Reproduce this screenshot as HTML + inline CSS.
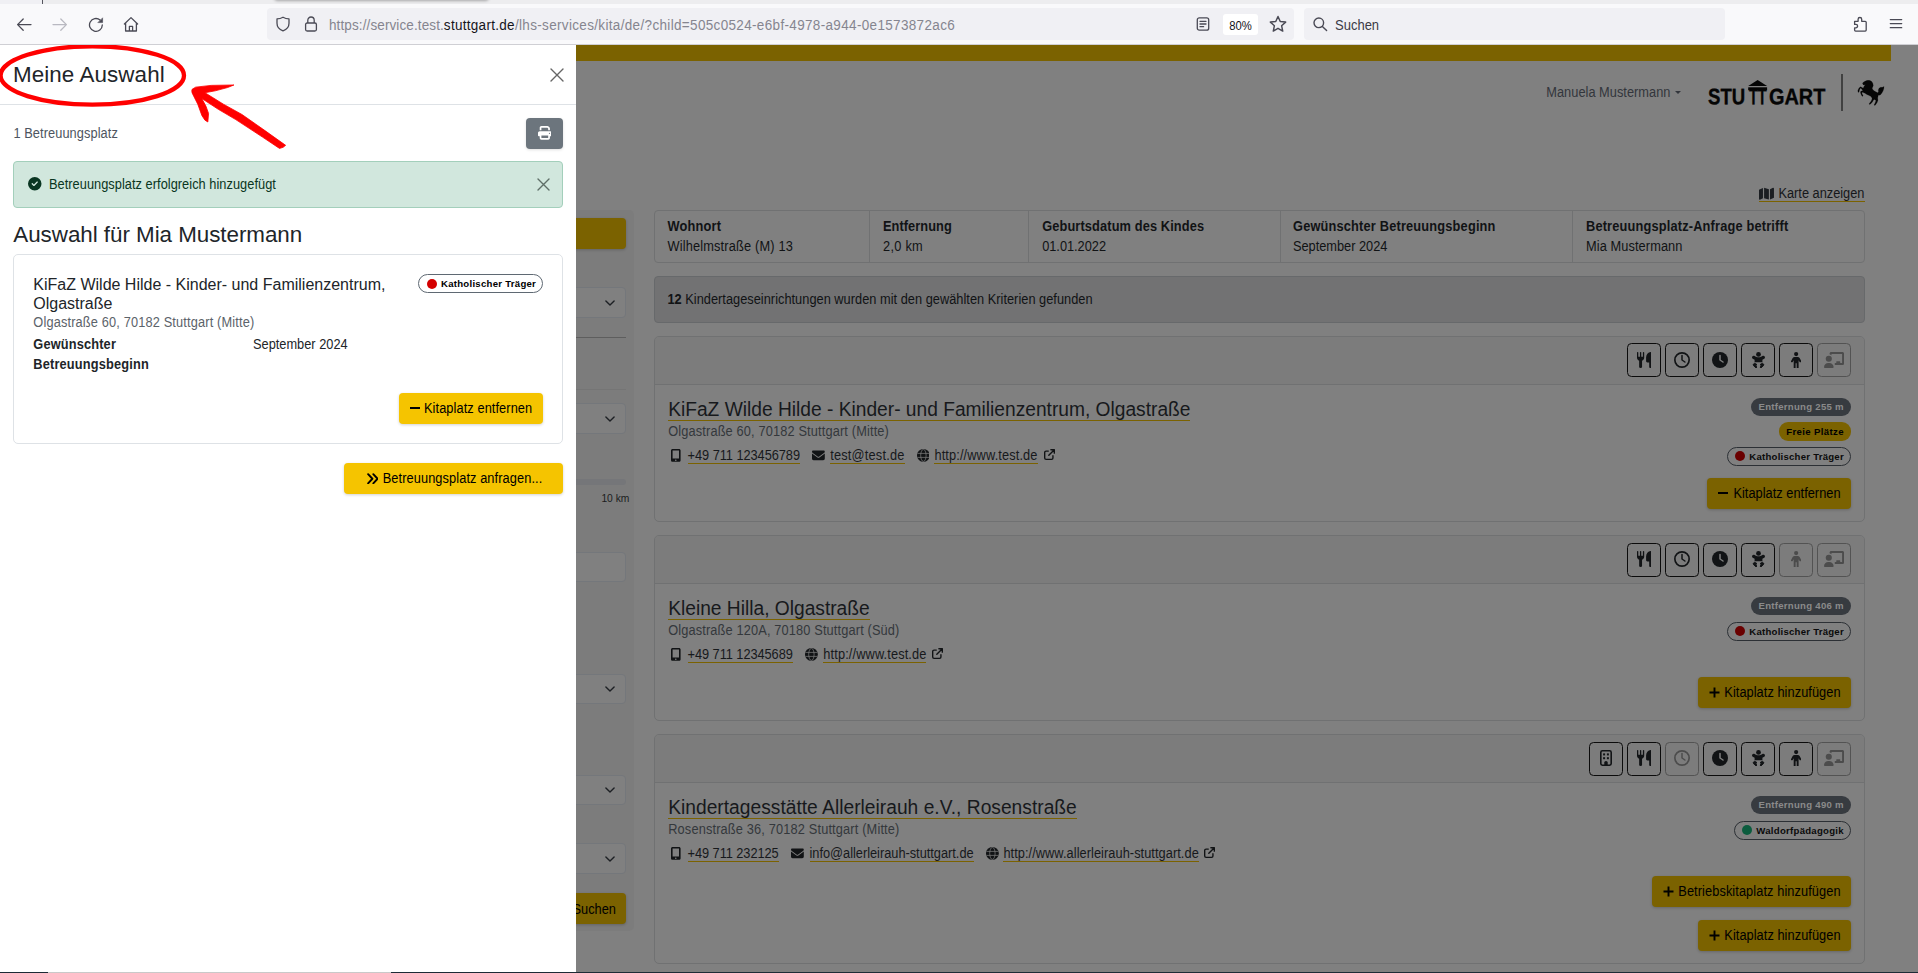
<!DOCTYPE html>
<html lang="de">
<head>
<meta charset="utf-8">
<title>Kita - Meine Auswahl</title>
<style>
*{box-sizing:border-box;margin:0;padding:0}
html,body{width:1918px;height:973px;overflow:hidden;background:#808080}
body{font-family:"Liberation Sans",Arial,sans-serif;font-size:12.8px;line-height:1.5;color:#212529;position:relative}
.abs{position:absolute}
svg{display:block}
/* ---------- browser chrome ---------- */
#chrome{position:absolute;left:0;top:0;width:1918px;height:45px;background:#f9f9fb;border-bottom:1px solid #cfcfd4;z-index:50}
#tabstrip{position:absolute;left:0;top:0;width:1918px;height:4px;background:#ededef}
.ubar{position:absolute;top:8px;height:32px;background:#f0f0f4;border-radius:4px}
.ctext{font-family:"Liberation Sans",sans-serif;font-size:13.5px;line-height:16px;white-space:nowrap;color:#15141a;letter-spacing:.29px;transform:scaleY(1.1);transform-origin:0 20%}
/* ---------- offcanvas ---------- */
#off{position:absolute;left:0;top:45px;width:576px;height:927px;background:#fff;z-index:20}
.btn{position:absolute;background:#f5c400;border-radius:4px;color:#000;font-size:12.8px;line-height:19px;white-space:nowrap;box-shadow:0 1px 3px rgba(0,0,0,.18)}
.badge{position:absolute;border-radius:10px;font-size:9.6px;font-weight:700;line-height:10px;white-space:nowrap}
.txb{transform:scaleY(1.10);transform-origin:0 73%}
/* ---------- background page (dimmed) ---------- */
#page{position:absolute;left:576px;top:45px;width:1342px;height:927px;background:#808080;overflow:hidden;z-index:10;color:#111418}
/*GEN*/
.tx{display:inline-block;transform:scaleY(1.10);transform-origin:0 27%}
.abs.tx{display:block}
.ttl .tx{transform:scaleY(1.07)}
.ttl{font-size:19.200px;line-height:23px;color:#17191c;white-space:nowrap;border-bottom:1.300px solid #7b6200;height:24.300px}
.lnk{color:#17191c;white-space:nowrap;line-height:17px;height:18.300px;border-bottom:1.300px solid #7b6200}
/*END*/
</style>
</head>
<body>
<!-- ================= BROWSER CHROME ================= -->
<div id="chrome">
  <div id="tabstrip"></div>
  <div class="abs" style="left:0;top:0;width:42px;height:4px;background:#f0f0f4"></div>
  <div class="abs" style="left:42px;top:0;width:1px;height:4px;background:#55555e"></div>
  <div class="abs" style="left:275px;top:-6px;width:213px;height:6px;background:#bbb;border-radius:0 0 3px 3px;box-shadow:0 0 3px 1px rgba(0,0,0,.3)"></div>
  <!-- nav icons -->
  <svg class="abs" style="left:16px;top:16px" width="16" height="16" viewBox="0 0 16 16" fill="none" stroke="#4a4a55" stroke-width="1.3" stroke-linecap="round" stroke-linejoin="round"><path d="M15 8.6H1.6M7.2 3 1.6 8.6l5.6 5.6"/></svg>
  <svg class="abs" style="left:52px;top:16px" width="16" height="16" viewBox="0 0 16 16" fill="none" stroke="#b9b9c1" stroke-width="1.3" stroke-linecap="round" stroke-linejoin="round"><path d="M1 8.6h13.4M8.8 3l5.6 5.6-5.6 5.6"/></svg>
  <svg class="abs" style="left:88px;top:16px" width="16" height="16" viewBox="0 0 16 16" fill="none" stroke="#4a4a55" stroke-width="1.3" stroke-linecap="round"><path d="M14.3 9a6.4 6.4 0 1 1-2.2-4.9"/><path d="M14.6 2.2v4.4h-4.4z" fill="#4a4a55" stroke-width=".6" stroke-linejoin="round"/></svg>
  <svg class="abs" style="left:123px;top:16px" width="16" height="16" viewBox="0 0 16 16" fill="none" stroke="#4a4a55" stroke-width="1.3" stroke-linecap="round" stroke-linejoin="round"><path d="M1.4 8 8 1.6 14.6 8M2.6 7v8h10.8V7M6.4 15v-4.6h3.2V15"/></svg>
  <!-- url bar -->
  <div class="ubar" style="left:267px;width:1027px"></div>
  <svg class="abs" style="left:275px;top:16px" width="16" height="16" viewBox="0 0 16 16" fill="none" stroke="#4a4a55" stroke-width="1.3" stroke-linejoin="round"><path d="M8 1.2c2 1.1 4 1.6 6 1.7v4.3c0 3.6-2.4 6.300-6 7.600-3.600-1.300-6-4-6-7.600V2.900c2-.1 4-.6 6-1.700z"/></svg>
  <svg class="abs" style="left:303px;top:15px" width="16" height="18" viewBox="0 0 16 18" fill="none" stroke="#4a4a55" stroke-width="1.3" stroke-linejoin="round"><rect x="2.600" y="8" width="10.800" height="8" rx="1.500"/><path d="M4.800 8V5.200a3.200 3.200 0 0 1 6.400 0V8"/></svg>
  <div class="abs ctext" id="url" style="left:329px;top:17px;color:#85858f"><span style="letter-spacing:.11px">https://service.test.</span><span style="color:#15141a">stuttgart.de</span><span style="letter-spacing:.335px">/lhs-services/kita/de/?child=505c0524-e6bf-4978-a944-0e1573872ac6</span></div>
  <svg class="abs" style="left:1195px;top:16px" width="16" height="16" viewBox="0 0 16 16" fill="none" stroke="#4a4a55" stroke-width="1.300" stroke-linejoin="round" stroke-linecap="round"><rect x="2.300" y="1.800" width="11.400" height="12.400" rx="2"/><path d="M5 5.300h6M5 8h6M5 10.700h3.600"/></svg>
  <div class="abs" style="left:1223px;top:14.400px;width:35px;height:20.400px;background:#fff;border-radius:3px"></div>
  <div class="abs ctext" style="left:1223px;top:17px;width:35px;text-align:center;font-size:11.300px;letter-spacing:0;color:#15141a">80%</div>
  <svg class="abs" style="left:1269px;top:15.300px" width="18" height="18" viewBox="0 0 16 16" fill="none" stroke="#4a4a55" stroke-width="1.300" stroke-linejoin="round"><path d="M8 1.300l2 4.500 4.800.5-3.600 3.200 1 4.800L8 11.800l-4.200 2.500 1-4.800L1.200 6.300 6 5.800z"/></svg>
  <!-- search bar -->
  <div class="ubar" style="left:1304px;width:421px"></div>
  <svg class="abs" style="left:1312px;top:16px" width="16" height="16" viewBox="0 0 16 16" fill="none" stroke="#4a4a55" stroke-width="1.400" stroke-linecap="round"><circle cx="6.800" cy="6.800" r="4.800"/><path d="M10.400 10.400l4.200 4.200"/></svg>
  <div class="abs ctext" style="left:1335px;top:17px;color:#3b3b46;font-size:13px;letter-spacing:0">Suchen</div>
  <!-- right icons -->
  <svg class="abs" style="left:1852px;top:16px" width="16" height="16" viewBox="0 0 16 16" fill="none" stroke="#4a4a55" stroke-width="1.300" stroke-linejoin="round"><path d="M2.600 5.300h3.500V3.300a1.800 1.800 0 0 1 3.600 0v2h3.500c.6 0 1 .4 1 1v7.800c0 .6-.4 1-1 1H3.600c-.6 0-1-.4-1-1v-2.300h1.300a1.700 1.700 0 0 0 0-3.400H2.600z"/></svg>
  <svg class="abs" style="left:1888px;top:16px" width="16" height="16" viewBox="0 0 16 16" fill="none" stroke="#4a4a55" stroke-width="1.300" stroke-linecap="round"><path d="M2.300 3.600h11.400M2.300 7.600h11.400M2.300 11.700h11.400"/></svg>
</div>

<!-- ================= DIMMED PAGE ================= -->
<div id="page">
  <div class="abs" style="left:0;top:0;width:1315px;height:16px;background:#7b6200"></div>
  <div class="abs tx" id="p_user" style="left:970.3px;top:37px;color:#33363c;white-space:nowrap;letter-spacing:0.019px">Manuela Mustermann</div>
  <svg class="abs" style="left:1098.5px;top:45.5px" width="6" height="3" viewBox="0 0 6 3" fill="#33363c"><path d="M0 0h6L3 3z"/></svg>
  <div class="abs" id="p_logo1" style="left:1132.2px;top:40.0px;font-size:22px;line-height:24px;font-weight:700;color:#050505;white-space:nowrap;transform-origin:0 3.600px;-webkit-text-stroke:.35px #050505;transform:scale(.845,1.02) rotate(.03deg)">STU</div>
  <div class="abs" id="p_logo2" style="left:1172.6px;top:40.0px;font-size:22px;line-height:24px;font-weight:700;color:#050505;white-space:nowrap;transform-origin:0 3.600px;-webkit-text-stroke:.35px #050505;transform:scale(.66,1.02) rotate(.03deg)">TT</div>
  <div class="abs" id="p_logo3" style="left:1193.0px;top:40.0px;font-size:22px;line-height:24px;font-weight:700;color:#050505;white-space:nowrap;transform-origin:0 3.600px;-webkit-text-stroke:.35px #050505;transform:scale(.905,1.02) rotate(.03deg)">GART</div>
  <svg class="abs" style="left:1171px;top:34px" width="22" height="12" viewBox="0 0 22 12"><path d="M1.200 7.100L10.650 .9 20.100 7.100z" fill="#050505"/><rect x="1.200" y="8.300" width="18.900" height="2.900" fill="#050505"/></svg>
  <div class="abs" style="left:1265.3px;top:29px;width:1.300px;height:37px;background:#414141"></div>
  <svg class="abs" style="left:1281px;top:34.5px" width="28" height="26" viewBox="0 0 28 26" fill="#050505" stroke="#050505" stroke-width=".15" stroke-linejoin="round"><path d="M5.47 3.17 L6.6 2.04 L7.96 1.27 L9.54 0.55 L10.9 0.23 L12.26 0.36 L13.62 0.82 L14.97 1.81 L15.88 3.4 L16.33 5.43 L15.74 7.02 L15.2 8.37 L15.88 9.73 L17.46 11.09 L19.27 11.99 L20.86 12.76 L21.44 11.77 L21.26 9.96 L21.99 8.24 L23.57 7.33 L25.15 7.33 L26.29 6.88 L27.05 6.34 L26.87 8.6 L26.15 10.86 L24.93 13.12 L23.57 14.71 L22.44 15.3 L21.53 14.93 L21.08 16.29 L20.72 18.1 L20.99 20.14 L20.18 22.4 L18.82 24.44 L18.0 25.43 L17.01 24.98 L17.82 23.53 L18.59 21.72 L18.82 20.14 L17.46 19.46 L16.56 19.91 L15.43 21.95 L13.84 23.76 L12.71 24.53 L11.94 24.07 L12.85 22.85 L14.2 21.04 L15.11 18.78 L14.52 17.2 L13.62 16.29 L11.58 15.3 L9.77 14.39 L7.96 13.35 L6.83 12.67 L5.47 12.31 L4.79 12.76 L5.24 14.03 L6.15 15.84 L5.47 16.52 L4.43 15.16 L3.66 13.35 L3.43 11.77 L4.34 11.09 L5.7 10.77 L5.24 9.73 L4.11 8.6 L3.21 8.24 L2.53 9.96 L1.99 12.13 L1.08 12.31 L0.81 10.64 L1.53 8.83 L2.98 7.02 L3.66 6.7 L5.02 7.47 L6.15 8.24 L6.69 7.02 L7.42 5.66 L8.41 4.62 L7.28 5.07 L6.38 4.89 L5.79 4.07z"/></svg>
  <svg class="abs" style="left:1183.0px;top:141.6px;color:#1b1e22" width="14.98" height="13.31" viewBox="0 0 14.400 12.800" fill="#1b1e22"><path d="M0 2.600L3.800.9v10L.9 12.200c-.4.200-.9-.1-.9-.6zM4.900.8l4.600 1.300v10L4.900 10.900zM10.600 2.100L13.500.8c.4-.2.900.1.900.6v9l-3.800 1.700z"/></svg>
  <div class="abs tx" id="p_karte" style="left:1202.5px;top:137.5px;color:#15171a;white-space:nowrap;letter-spacing:-0.014px">Karte anzeigen</div>
  <div class="abs" style="left:1183px;top:156px;width:105.700px;height:1.300px;background:#7b6200"></div>
  <div class="abs" style="left:-10px;top:165px;width:68px;height:721px;background:#7c7c7c;border-radius:5px"></div>
  <div class="abs" style="left:-10px;top:173px;width:60px;height:31px;background:#7b6200;border-radius:4px;box-shadow:0 1px 3px rgba(0,0,0,.2)"></div>
  <div class="abs" style="left:-10px;top:242px;width:60px;height:31px;background:#808080;border:1px solid #74777b;border-radius:4px"></div>
  <svg class="abs" style="left:28.5px;top:254.5px" width="10" height="6" viewBox="0 0 10 6" fill="none" stroke="#1d2024" stroke-width="1.400" stroke-linecap="round" stroke-linejoin="round"><path d="M.9.900L5 5 9.100.900"/></svg>
  <div class="abs" style="left:0;top:292px;width:50px;height:1px;background:#5e5e5e"></div>
  <div class="abs" style="left:0;top:344px;width:50px;height:1px;background:#757575"></div>
  <div class="abs" style="left:-10px;top:358px;width:60px;height:31px;background:#808080;border:1px solid #74777b;border-radius:4px"></div>
  <svg class="abs" style="left:28.5px;top:370.5px" width="10" height="6" viewBox="0 0 10 6" fill="none" stroke="#1d2024" stroke-width="1.400" stroke-linecap="round" stroke-linejoin="round"><path d="M.9.900L5 5 9.100.900"/></svg>
  <div class="abs" style="left:0;top:434px;width:50px;height:6px;background:#757679;border-radius:0 3px 3px 0"></div>
  <div class="abs tx" id="p_km" style="left:25.4px;top:445px;font-size:10.300px;line-height:16px;color:#1b1d20;white-space:nowrap">10 km</div>
  <div class="abs" style="left:-10px;top:507px;width:60px;height:30px;background:#808080;border:1px solid #74777b;border-radius:4px"></div>
  <div class="abs" style="left:-10px;top:629px;width:60px;height:30px;background:#808080;border:1px solid #74777b;border-radius:4px"></div>
  <svg class="abs" style="left:28.5px;top:641.0px" width="10" height="6" viewBox="0 0 10 6" fill="none" stroke="#1d2024" stroke-width="1.400" stroke-linecap="round" stroke-linejoin="round"><path d="M.9.900L5 5 9.100.900"/></svg>
  <div class="abs" style="left:-10px;top:730px;width:60px;height:30px;background:#808080;border:1px solid #74777b;border-radius:4px"></div>
  <svg class="abs" style="left:28.5px;top:742.0px" width="10" height="6" viewBox="0 0 10 6" fill="none" stroke="#1d2024" stroke-width="1.400" stroke-linecap="round" stroke-linejoin="round"><path d="M.9.900L5 5 9.100.900"/></svg>
  <div class="abs" style="left:-10px;top:798px;width:60px;height:31px;background:#808080;border:1px solid #74777b;border-radius:4px"></div>
  <svg class="abs" style="left:28.5px;top:810.5px" width="10" height="6" viewBox="0 0 10 6" fill="none" stroke="#1d2024" stroke-width="1.400" stroke-linecap="round" stroke-linejoin="round"><path d="M.9.900L5 5 9.100.900"/></svg>
  <div class="abs" style="left:-10px;top:848px;width:60px;height:31px;background:#7b6200;border-radius:4px;box-shadow:0 1px 3px rgba(0,0,0,.2)"></div>
  <div class="abs tx" id="p_suchen" style="left:-3.5px;top:854px;color:#000;white-space:nowrap">Suchen</div>
  <div class="abs" style="left:78px;top:165px;width:1211px;height:53px;border:1px solid #707172;border-radius:4px"></div>
  <div class="abs" style="left:293px;top:166px;width:1px;height:51px;background:#707172"></div>
  <div class="abs" style="left:452px;top:166px;width:1px;height:51px;background:#707172"></div>
  <div class="abs" style="left:704px;top:166px;width:1px;height:51px;background:#707172"></div>
  <div class="abs" style="left:996px;top:166px;width:1px;height:51px;background:#707172"></div>
  <div class="abs tx" id="p_cl0" style="left:91.4px;top:170.5px;font-weight:700;color:#111315;white-space:nowrap;letter-spacing:0.220px">Wohnort</div>
  <div class="abs tx" id="p_cv0" style="left:91.4px;top:190.7px;color:#111315;white-space:nowrap;letter-spacing:0.165px">Wilhelmstraße (M) 13</div>
  <div class="abs tx" id="p_cl1" style="left:307px;top:170.5px;font-weight:700;color:#111315;white-space:nowrap;letter-spacing:0.055px">Entfernung</div>
  <div class="abs tx" id="p_cv1" style="left:307px;top:190.7px;color:#111315;white-space:nowrap;letter-spacing:0.266px">2,0 km</div>
  <div class="abs tx" id="p_cl2" style="left:466.2px;top:170.5px;font-weight:700;color:#111315;white-space:nowrap;letter-spacing:0.118px">Geburtsdatum des Kindes</div>
  <div class="abs tx" id="p_cv2" style="left:466.2px;top:190.7px;color:#111315;white-space:nowrap;letter-spacing:-0.026px">01.01.2022</div>
  <div class="abs tx" id="p_cl3" style="left:717px;top:170.5px;font-weight:700;color:#111315;white-space:nowrap;letter-spacing:0.176px">Gewünschter Betreuungsbeginn</div>
  <div class="abs tx" id="p_cv3" style="left:717px;top:190.7px;color:#111315;white-space:nowrap;letter-spacing:-0.016px">September 2024</div>
  <div class="abs tx" id="p_cl4" style="left:1010px;top:170.5px;font-weight:700;color:#111315;white-space:nowrap;letter-spacing:0.168px">Betreuungsplatz-Anfrage betrifft</div>
  <div class="abs tx" id="p_cv4" style="left:1010px;top:190.7px;color:#111315;white-space:nowrap;letter-spacing:0.086px">Mia Mustermann</div>
  <div class="abs" style="left:78px;top:231px;width:1211px;height:46.500px;background:#727273;border:1px solid #67696b;border-radius:4px"></div>
  <div class="abs tx" id="p_alert" style="left:91.4px;top:244px;color:#111315;white-space:nowrap;letter-spacing:0.017px"><b>12</b> Kindertageseinrichtungen wurden mit den gewählten Kriterien gefunden</div>
  <div class="abs" style="left:78px;top:291px;width:1211px;height:186px;border:1px solid #707172;border-radius:5px"></div>
  <div class="abs" style="left:79px;top:292px;width:1209px;height:48px;background:#7c7c7c;border-bottom:1px solid #707172;border-radius:4px 4px 0 0"></div>
  <div class="abs" style="left:1241px;top:298px;width:34px;height:34px;border:1px solid #535353;border-radius:4.500px"></div>
  <svg class="abs" style="left:1248.0px;top:307px;color:#4c4c4c" width="20.00" height="16.00" viewBox="0 0 20 16" fill="#4c4c4c"><path d="M5.600 2.300V1.600C5.600.7 6.300 0 7.200 0h11.200C19.300 0 20 .7 20 1.600v9.800c0 .9-.7 1.600-1.600 1.600H10.800v-1.900h7.300V1.900H7.500v1.300z"/><rect x="12.300" y="9.300" width="3.900" height="2.200" rx=".4"/><circle cx="4.800" cy="6.800" r="3.050"/><path d="M0 15.200c0-2.300 1.900-4.200 4.200-4.200h1.200c2.300 0 4.200 1.900 4.200 4.200 0 .4-.4.800-.8.800H.8c-.4 0-.8-.4-.8-.8z"/></svg>
  <div class="abs" style="left:1203px;top:298px;width:34px;height:34px;border:1px solid #0b0b0b;border-radius:4.500px"></div>
  <svg class="abs" style="left:1214.85px;top:307px;color:#111315" width="10.30" height="16.00" viewBox="0 0 10.300 16" fill="#111315"><circle cx="5.150" cy="2.100" r="2.100"/><path d="M3.600 4.900h3.100c.8 0 1.500.4 1.900 1.100l1.600 2.900c.3.500.1 1-.3 1.300-.5.300-1 .1-1.300-.3L7.600 8.200V16H5.700v-4.800H4.600V16H2.700V8.200L1.700 9.900c-.3.400-.8.600-1.300.3-.4-.3-.6-.8-.3-1.300L1.700 6c.4-.7 1.100-1.100 1.900-1.100z"/></svg>
  <div class="abs" style="left:1165px;top:298px;width:34px;height:34px;border:1px solid #0b0b0b;border-radius:4.500px"></div>
  <svg class="abs" style="left:1175.5px;top:307px;color:#111315" width="13.00" height="16.00" viewBox="0 0 13 16" fill="#111315"><circle cx="6.500" cy="2.400" r="2.400"/><path d="M.3 4.500c.5-.8 1.500-1 2.300-.5C3.700 4.800 5 5.300 6.500 5.300s2.800-.5 3.900-1.300c.8-.5 1.800-.3 2.300.5s.3 1.800-.5 2.300c-.6.400-1.200.7-1.800 1v2.400h-7.800V7.800c-.6-.3-1.200-.6-1.800-1C0 6.300-.2 5.300.3 4.500z"/><g stroke="currentColor" stroke-width=".9" stroke-linejoin="round"><path d="M2.700 11.300l2.300 1.300-1.300 1.200 1.300 1.300-1 .8-2.400-2.200c-.5-.5-.5-1.200-.1-1.700z"/><path d="M10.300 11.300L8 12.600l1.300 1.200L8 15.100l1 .8 2.400-2.200c.5-.5.5-1.200.1-1.700z"/></g></svg>
  <div class="abs" style="left:1127px;top:298px;width:34px;height:34px;border:1px solid #0b0b0b;border-radius:4.500px"></div>
  <svg class="abs" style="left:1136.0px;top:307px;color:#111315" width="16.00" height="16.00" viewBox="0 0 16 16" fill="#111315"><circle cx="8" cy="8" r="8"/><path d="M8 3.400V8l3 2" fill="none" stroke="#808080" stroke-width="1.500" stroke-linecap="round" stroke-linejoin="round"/></svg>
  <div class="abs" style="left:1089px;top:298px;width:34px;height:34px;border:1px solid #0b0b0b;border-radius:4.500px"></div>
  <svg class="abs" style="left:1098.0px;top:307px;color:#111315" width="16.00" height="16.00" viewBox="0 0 16 16" fill="#111315"><circle cx="8" cy="8" r="7.150" fill="none" stroke="currentColor" stroke-width="1.650"/><path d="M8 3.600V8l2.900 2" fill="none" stroke="currentColor" stroke-width="1.500" stroke-linecap="round" stroke-linejoin="round"/></svg>
  <div class="abs" style="left:1051px;top:298px;width:34px;height:34px;border:1px solid #0b0b0b;border-radius:4.500px"></div>
  <svg class="abs" style="left:1060.65px;top:307px;color:#111315" width="14.70" height="16.00" viewBox="0 0 14.7 16" fill="#111315"><path d="M0 .5Q0 0 .65 0 1.300 0 1.300 .5V4.800H2.950V.5Q2.950 0 3.600 0 4.250 0 4.250 .5V4.800H5.900V.5Q5.900 0 6.550 0 7.200 0 7.200 .5V5.500C7.200 7.200 6.300 8.300 5.050 8.700V15Q5.050 16 3.600 16 2.150 16 2.150 15V8.700C.9 8.300 0 7.200 0 5.500z"/><path d="M14.700 .5V15.200Q14.700 16 13.450 16 12.200 16 12.200 15.200V10.400H10.400C9.600 10.400 9.100 9.900 9.100 9.100V5.600C9.100 2.600 11 .4 13.800 0Q14.700 0 14.700 .5z"/></svg>
  <div class="abs ttl" id="c1_t" style="left:92.2px;top:351.6px;letter-spacing:-0.004px"><span class="tx">KiFaZ Wilde Hilde - Kinder- und Familienzentrum, Olgastraße</span></div>
  <div class="abs tx" id="c1_a" style="left:92.2px;top:375.9px;color:#34383c;white-space:nowrap;letter-spacing:0.139px">Olgastraße 60, 70182 Stuttgart (Mitte)</div>
  <svg class="abs" style="left:95px;top:404.2px;color:#111315" width="9.60" height="12.80" viewBox="0 0 9.600 12.800" fill="#111315"><path fill-rule="evenodd" d="M1.600 0h6.400c.9 0 1.600.7 1.600 1.600v9.600c0 .9-.7 1.600-1.600 1.600H1.600C.7 12.800 0 12.100 0 11.200V1.600C0 .7.700 0 1.600 0zM1.600 1.600v8h6.400v-8zM4.800 10.400a.8.800 0 1 0 0 1.600.8.800 0 0 0 0-1.600z"/></svg>
  <div class="abs lnk" id="c1c_0" style="left:111.6px;top:400.9px;letter-spacing:-0.052px"><span class="tx">+49 711 123456789</span></div>
  <svg class="abs" style="left:236px;top:404.2px;color:#111315" width="12.80" height="12.80" viewBox="0 0 12.800 12.800" fill="#111315"><path d="M1.200 1.600C.5 1.600 0 2.100 0 2.800c0 .4.200.7.500 1l5.400 4c.3.200.7.200 1 0l5.400-4c.3-.2.500-.6.500-1 0-.7-.5-1.200-1.200-1.200zM0 4.400v5.200c0 .9.700 1.600 1.600 1.600h9.600c.9 0 1.600-.7 1.600-1.600V4.400L7.400 8.400c-.6.400-1.400.4-1.900 0z"/></svg>
  <div class="abs lnk" id="c1c_1" style="left:254.2px;top:400.9px;letter-spacing:0.196px"><span class="tx">test@test.de</span></div>
  <svg class="abs" style="left:340.6px;top:404.2px;color:#111315" width="12.80" height="12.80" viewBox="0 0 12.800 12.800" fill="#111315"><circle cx="6.400" cy="6.400" r="6.400"/><g fill="none" stroke="#808080" stroke-width=".7"><ellipse cx="6.400" cy="6.400" rx="2.700" ry="6"/><path d="M.4 4.400h12M.4 8.400h12"/></g></svg>
  <div class="abs lnk" id="c1c_2" style="left:358.4px;top:400.9px;letter-spacing:0.121px"><span class="tx">http://www.test.de</span></div>
  <svg class="abs" style="left:467.5px;top:403.8px;color:#111315" width="11.01" height="11.01" viewBox="0 0 12.800 12.800" fill="#111315"><g fill="none" stroke="currentColor" stroke-width="1.600" stroke-linecap="round" stroke-linejoin="round"><path d="M5 2.400H2.400c-.9 0-1.600.7-1.600 1.600v6.400c0 .9.700 1.600 1.600 1.600h6.400c.9 0 1.600-.7 1.600-1.600V7.800"/><path d="M8 .8h4v4M12 .8L5.600 7.200"/></g></svg>
  <div class="abs" style="left:1175px;top:353px;width:100px;height:17.700px;border-radius:9px;background:#373b40"></div>
  <div class="badge" id="bd1" style="left:1182.5px;top:357.35px;color:#8a8a8a;font-size:9.600px;letter-spacing:0.273px">Entfernung 255 m</div>
  <div class="abs" style="left:1203px;top:377.3px;width:72px;height:18.400px;border-radius:9px;background:#7b6200"></div>
  <div class="badge" id="bd2" style="left:1210.2px;top:381.85px;color:#000;font-size:9.600px;letter-spacing:0.364px">Freie Plätze</div>
  <div class="abs" style="left:1151px;top:402px;width:124px;height:18.500px;border-radius:10px;border:1px solid #2c3035;background:#808080"></div>
  <div class="abs" style="left:1158.6px;top:406.1px;width:10.400px;height:10.400px;border-radius:50%;background:#6a0000"></div>
  <div class="badge" id="bd3" style="left:1173.3px;top:406.75px;color:#0a0a0a;font-size:9.600px;letter-spacing:0.236px">Katholischer Träger</div>
  <div class="abs" style="left:1131px;top:433px;width:144px;height:30.500px;background:#7b6200;border-radius:4px;box-shadow:0 1px 3px rgba(0,0,0,.2)"></div>
  <div class="abs" style="left:1141.5px;top:447.3px;width:10px;height:1.700px;background:#000"></div>
  <div class="abs tx" id="c1b" style="left:1157.4px;top:438px;color:#000;white-space:nowrap;letter-spacing:0.025px">Kitaplatz entfernen</div>
  <div class="abs" style="left:78px;top:490px;width:1211px;height:186px;border:1px solid #707172;border-radius:5px"></div>
  <div class="abs" style="left:79px;top:491px;width:1209px;height:48px;background:#7c7c7c;border-bottom:1px solid #707172;border-radius:4px 4px 0 0"></div>
  <div class="abs" style="left:1241px;top:498px;width:34px;height:34px;border:1px solid #535353;border-radius:4.500px"></div>
  <svg class="abs" style="left:1248.0px;top:506px;color:#4c4c4c" width="20.00" height="16.00" viewBox="0 0 20 16" fill="#4c4c4c"><path d="M5.600 2.300V1.600C5.600.7 6.300 0 7.200 0h11.200C19.300 0 20 .7 20 1.600v9.800c0 .9-.7 1.600-1.600 1.600H10.800v-1.900h7.300V1.900H7.500v1.300z"/><rect x="12.300" y="9.300" width="3.900" height="2.200" rx=".4"/><circle cx="4.800" cy="6.800" r="3.050"/><path d="M0 15.200c0-2.300 1.900-4.200 4.200-4.200h1.200c2.300 0 4.200 1.900 4.200 4.200 0 .4-.4.800-.8.800H.8c-.4 0-.8-.4-.8-.8z"/></svg>
  <div class="abs" style="left:1203px;top:498px;width:34px;height:34px;border:1px solid #535353;border-radius:4.500px"></div>
  <svg class="abs" style="left:1214.85px;top:506px;color:#4c4c4c" width="10.30" height="16.00" viewBox="0 0 10.300 16" fill="#4c4c4c"><circle cx="5.150" cy="2.100" r="2.100"/><path d="M3.600 4.900h3.100c.8 0 1.500.4 1.900 1.100l1.600 2.900c.3.500.1 1-.3 1.300-.5.300-1 .1-1.300-.3L7.600 8.200V16H5.700v-4.800H4.600V16H2.700V8.200L1.700 9.900c-.3.400-.8.600-1.300.3-.4-.3-.6-.8-.3-1.300L1.700 6c.4-.7 1.100-1.100 1.900-1.100z"/></svg>
  <div class="abs" style="left:1165px;top:498px;width:34px;height:34px;border:1px solid #0b0b0b;border-radius:4.500px"></div>
  <svg class="abs" style="left:1175.5px;top:506px;color:#111315" width="13.00" height="16.00" viewBox="0 0 13 16" fill="#111315"><circle cx="6.500" cy="2.400" r="2.400"/><path d="M.3 4.500c.5-.8 1.500-1 2.300-.5C3.700 4.800 5 5.300 6.500 5.300s2.800-.5 3.900-1.300c.8-.5 1.800-.3 2.300.5s.3 1.800-.5 2.300c-.6.400-1.200.7-1.800 1v2.400h-7.800V7.800c-.6-.3-1.200-.6-1.800-1C0 6.300-.2 5.300.3 4.500z"/><g stroke="currentColor" stroke-width=".9" stroke-linejoin="round"><path d="M2.700 11.300l2.300 1.300-1.300 1.200 1.300 1.300-1 .8-2.400-2.200c-.5-.5-.5-1.200-.1-1.700z"/><path d="M10.300 11.300L8 12.600l1.300 1.200L8 15.100l1 .8 2.400-2.200c.5-.5.5-1.200.1-1.700z"/></g></svg>
  <div class="abs" style="left:1127px;top:498px;width:34px;height:34px;border:1px solid #0b0b0b;border-radius:4.500px"></div>
  <svg class="abs" style="left:1136.0px;top:506px;color:#111315" width="16.00" height="16.00" viewBox="0 0 16 16" fill="#111315"><circle cx="8" cy="8" r="8"/><path d="M8 3.400V8l3 2" fill="none" stroke="#808080" stroke-width="1.500" stroke-linecap="round" stroke-linejoin="round"/></svg>
  <div class="abs" style="left:1089px;top:498px;width:34px;height:34px;border:1px solid #0b0b0b;border-radius:4.500px"></div>
  <svg class="abs" style="left:1098.0px;top:506px;color:#111315" width="16.00" height="16.00" viewBox="0 0 16 16" fill="#111315"><circle cx="8" cy="8" r="7.150" fill="none" stroke="currentColor" stroke-width="1.650"/><path d="M8 3.600V8l2.900 2" fill="none" stroke="currentColor" stroke-width="1.500" stroke-linecap="round" stroke-linejoin="round"/></svg>
  <div class="abs" style="left:1051px;top:498px;width:34px;height:34px;border:1px solid #0b0b0b;border-radius:4.500px"></div>
  <svg class="abs" style="left:1060.65px;top:506px;color:#111315" width="14.70" height="16.00" viewBox="0 0 14.7 16" fill="#111315"><path d="M0 .5Q0 0 .65 0 1.300 0 1.300 .5V4.800H2.950V.5Q2.950 0 3.600 0 4.250 0 4.250 .5V4.800H5.900V.5Q5.900 0 6.550 0 7.200 0 7.200 .5V5.500C7.200 7.200 6.300 8.300 5.050 8.700V15Q5.050 16 3.600 16 2.150 16 2.150 15V8.700C.9 8.300 0 7.200 0 5.500z"/><path d="M14.700 .5V15.200Q14.700 16 13.450 16 12.200 16 12.200 15.200V10.400H10.400C9.600 10.400 9.100 9.900 9.100 9.100V5.600C9.100 2.600 11 .4 13.800 0Q14.700 0 14.700 .5z"/></svg>
  <div class="abs ttl" id="c2_t" style="left:92.2px;top:550.6px;letter-spacing:-0.003px"><span class="tx">Kleine Hilla, Olgastraße</span></div>
  <div class="abs tx" id="c2_a" style="left:92.2px;top:574.9px;color:#34383c;white-space:nowrap;letter-spacing:0.134px">Olgastraße 120A, 70180 Stuttgart (Süd)</div>
  <svg class="abs" style="left:95px;top:603.2px;color:#111315" width="9.60" height="12.80" viewBox="0 0 9.600 12.800" fill="#111315"><path fill-rule="evenodd" d="M1.600 0h6.400c.9 0 1.600.7 1.600 1.600v9.600c0 .9-.7 1.600-1.600 1.600H1.600C.7 12.800 0 12.100 0 11.200V1.600C0 .7.700 0 1.600 0zM1.600 1.600v8h6.400v-8zM4.800 10.400a.8.800 0 1 0 0 1.600.8.800 0 0 0 0-1.600z"/></svg>
  <div class="abs lnk" id="c2c_0" style="left:111.6px;top:599.9px;letter-spacing:-0.060px"><span class="tx">+49 711 12345689</span></div>
  <svg class="abs" style="left:229.3px;top:603.2px;color:#111315" width="12.80" height="12.80" viewBox="0 0 12.800 12.800" fill="#111315"><circle cx="6.400" cy="6.400" r="6.400"/><g fill="none" stroke="#808080" stroke-width=".7"><ellipse cx="6.400" cy="6.400" rx="2.700" ry="6"/><path d="M.4 4.400h12M.4 8.400h12"/></g></svg>
  <div class="abs lnk" id="c2c_1" style="left:247.3px;top:599.9px;letter-spacing:0.121px"><span class="tx">http://www.test.de</span></div>
  <svg class="abs" style="left:355.6px;top:602.8px;color:#111315" width="11.01" height="11.01" viewBox="0 0 12.800 12.800" fill="#111315"><g fill="none" stroke="currentColor" stroke-width="1.600" stroke-linecap="round" stroke-linejoin="round"><path d="M5 2.400H2.400c-.9 0-1.600.7-1.600 1.600v6.400c0 .9.700 1.600 1.600 1.600h6.400c.9 0 1.600-.7 1.600-1.600V7.800"/><path d="M8 .8h4v4M12 .8L5.600 7.200"/></g></svg>
  <div class="abs" style="left:1175px;top:552px;width:100px;height:17.700px;border-radius:9px;background:#373b40"></div>
  <div class="badge" id="bd4" style="left:1182.5px;top:556.35px;color:#8a8a8a;font-size:9.600px;letter-spacing:0.273px">Entfernung 406 m</div>
  <div class="abs" style="left:1151px;top:577px;width:124px;height:18.500px;border-radius:10px;border:1px solid #2c3035;background:#808080"></div>
  <div class="abs" style="left:1158.6px;top:581.1px;width:10.400px;height:10.400px;border-radius:50%;background:#6a0000"></div>
  <div class="badge" id="bd5" style="left:1173.3px;top:581.75px;color:#0a0a0a;font-size:9.600px;letter-spacing:0.236px">Katholischer Träger</div>
  <div class="abs" style="left:1122px;top:632px;width:153px;height:30.500px;background:#7b6200;border-radius:4px;box-shadow:0 1px 3px rgba(0,0,0,.2)"></div>
  <svg class="abs" style="left:1133px;top:641.7px" width="11" height="11" viewBox="0 0 11 11" stroke="#000" stroke-width="1.900" stroke-linecap="butt"><path d="M5.500.5v10M.5 5.500h10"/></svg>
  <div class="abs tx" id="c2b" style="left:1148.3px;top:637px;color:#000;white-space:nowrap;letter-spacing:0.052px">Kitaplatz hinzufügen</div>
  <div class="abs" style="left:78px;top:689px;width:1211px;height:230px;border:1px solid #707172;border-radius:5px"></div>
  <div class="abs" style="left:79px;top:690px;width:1209px;height:48px;background:#7c7c7c;border-bottom:1px solid #707172;border-radius:4px 4px 0 0"></div>
  <div class="abs" style="left:1241px;top:697px;width:34px;height:34px;border:1px solid #535353;border-radius:4.500px"></div>
  <svg class="abs" style="left:1248.0px;top:705px;color:#4c4c4c" width="20.00" height="16.00" viewBox="0 0 20 16" fill="#4c4c4c"><path d="M5.600 2.300V1.600C5.600.7 6.300 0 7.200 0h11.200C19.300 0 20 .7 20 1.600v9.800c0 .9-.7 1.600-1.600 1.600H10.800v-1.900h7.300V1.900H7.500v1.300z"/><rect x="12.300" y="9.300" width="3.900" height="2.200" rx=".4"/><circle cx="4.800" cy="6.800" r="3.050"/><path d="M0 15.200c0-2.300 1.900-4.200 4.200-4.200h1.200c2.300 0 4.200 1.900 4.200 4.200 0 .4-.4.800-.8.800H.8c-.4 0-.8-.4-.8-.8z"/></svg>
  <div class="abs" style="left:1203px;top:697px;width:34px;height:34px;border:1px solid #0b0b0b;border-radius:4.500px"></div>
  <svg class="abs" style="left:1214.85px;top:705px;color:#111315" width="10.30" height="16.00" viewBox="0 0 10.300 16" fill="#111315"><circle cx="5.150" cy="2.100" r="2.100"/><path d="M3.600 4.900h3.100c.8 0 1.500.4 1.900 1.100l1.600 2.900c.3.500.1 1-.3 1.300-.5.300-1 .1-1.300-.3L7.600 8.200V16H5.700v-4.800H4.600V16H2.700V8.200L1.700 9.900c-.3.400-.8.600-1.300.3-.4-.3-.6-.8-.3-1.300L1.700 6c.4-.7 1.100-1.100 1.900-1.100z"/></svg>
  <div class="abs" style="left:1165px;top:697px;width:34px;height:34px;border:1px solid #0b0b0b;border-radius:4.500px"></div>
  <svg class="abs" style="left:1175.5px;top:705px;color:#111315" width="13.00" height="16.00" viewBox="0 0 13 16" fill="#111315"><circle cx="6.500" cy="2.400" r="2.400"/><path d="M.3 4.500c.5-.8 1.500-1 2.300-.5C3.700 4.800 5 5.300 6.500 5.300s2.800-.5 3.900-1.300c.8-.5 1.800-.3 2.300.5s.3 1.800-.5 2.300c-.6.400-1.200.7-1.800 1v2.400h-7.800V7.800c-.6-.3-1.200-.6-1.800-1C0 6.300-.2 5.300.3 4.500z"/><g stroke="currentColor" stroke-width=".9" stroke-linejoin="round"><path d="M2.700 11.300l2.300 1.300-1.300 1.200 1.300 1.300-1 .8-2.400-2.200c-.5-.5-.5-1.200-.1-1.700z"/><path d="M10.300 11.300L8 12.600l1.300 1.200L8 15.100l1 .8 2.400-2.200c.5-.5.5-1.200.1-1.700z"/></g></svg>
  <div class="abs" style="left:1127px;top:697px;width:34px;height:34px;border:1px solid #0b0b0b;border-radius:4.500px"></div>
  <svg class="abs" style="left:1136.0px;top:705px;color:#111315" width="16.00" height="16.00" viewBox="0 0 16 16" fill="#111315"><circle cx="8" cy="8" r="8"/><path d="M8 3.400V8l3 2" fill="none" stroke="#808080" stroke-width="1.500" stroke-linecap="round" stroke-linejoin="round"/></svg>
  <div class="abs" style="left:1089px;top:697px;width:34px;height:34px;border:1px solid #535353;border-radius:4.500px"></div>
  <svg class="abs" style="left:1098.0px;top:705px;color:#4c4c4c" width="16.00" height="16.00" viewBox="0 0 16 16" fill="#4c4c4c"><circle cx="8" cy="8" r="7.150" fill="none" stroke="currentColor" stroke-width="1.650"/><path d="M8 3.600V8l2.900 2" fill="none" stroke="currentColor" stroke-width="1.500" stroke-linecap="round" stroke-linejoin="round"/></svg>
  <div class="abs" style="left:1051px;top:697px;width:34px;height:34px;border:1px solid #0b0b0b;border-radius:4.500px"></div>
  <svg class="abs" style="left:1060.65px;top:705px;color:#111315" width="14.70" height="16.00" viewBox="0 0 14.7 16" fill="#111315"><path d="M0 .5Q0 0 .65 0 1.300 0 1.300 .5V4.800H2.950V.5Q2.950 0 3.600 0 4.250 0 4.250 .5V4.800H5.900V.5Q5.900 0 6.550 0 7.200 0 7.200 .5V5.500C7.200 7.200 6.300 8.300 5.050 8.700V15Q5.050 16 3.600 16 2.150 16 2.150 15V8.700C.9 8.300 0 7.200 0 5.500z"/><path d="M14.700 .5V15.200Q14.700 16 13.450 16 12.200 16 12.200 15.200V10.400H10.400C9.600 10.400 9.100 9.900 9.100 9.100V5.600C9.100 2.600 11 .4 13.800 0Q14.700 0 14.700 .5z"/></svg>
  <div class="abs" style="left:1013px;top:697px;width:34px;height:34px;border:1px solid #0b0b0b;border-radius:4.500px"></div>
  <svg class="abs" style="left:1024.0px;top:705px;color:#111315" width="12.00" height="16.00" viewBox="0 0 12 16" fill="#111315"><rect x=".8" y=".8" width="10.400" height="14.400" rx="1.600" fill="none" stroke="currentColor" stroke-width="1.600"/><rect x="3.100" y="3.400" width="2" height="2"/><rect x="6.900" y="3.400" width="2" height="2"/><rect x="3.100" y="7.200" width="2" height="2"/><rect x="6.900" y="7.200" width="2" height="2"/><path d="M4.300 15.200v-2.600c0-.9.700-1.700 1.700-1.700s1.700.8 1.700 1.700v2.600z"/></svg>
  <div class="abs ttl" id="c3_t" style="left:92.2px;top:749.6px;letter-spacing:0.017px"><span class="tx">Kindertagesstätte Allerleirauh e.V., Rosenstraße</span></div>
  <div class="abs tx" id="c3_a" style="left:92.2px;top:773.9px;color:#34383c;white-space:nowrap;letter-spacing:0.149px">Rosenstraße 36, 70182 Stuttgart (Mitte)</div>
  <svg class="abs" style="left:95px;top:802.2px;color:#111315" width="9.60" height="12.80" viewBox="0 0 9.600 12.800" fill="#111315"><path fill-rule="evenodd" d="M1.600 0h6.400c.9 0 1.600.7 1.600 1.600v9.600c0 .9-.7 1.600-1.600 1.600H1.600C.7 12.800 0 12.100 0 11.200V1.600C0 .7.700 0 1.600 0zM1.600 1.600v8h6.400v-8zM4.800 10.400a.8.800 0 1 0 0 1.600.8.800 0 0 0 0-1.600z"/></svg>
  <div class="abs lnk" id="c3c_0" style="left:111.6px;top:798.9px;letter-spacing:-0.066px"><span class="tx">+49 711 232125</span></div>
  <svg class="abs" style="left:215.4px;top:802.2px;color:#111315" width="12.80" height="12.80" viewBox="0 0 12.800 12.800" fill="#111315"><path d="M1.200 1.600C.5 1.600 0 2.100 0 2.800c0 .4.200.7.500 1l5.400 4c.3.200.7.200 1 0l5.400-4c.3-.2.500-.6.500-1 0-.7-.5-1.200-1.200-1.200zM0 4.400v5.200c0 .9.700 1.600 1.600 1.600h9.600c.9 0 1.600-.7 1.600-1.600V4.400L7.400 8.400c-.6.400-1.400.4-1.900 0z"/></svg>
  <div class="abs lnk" id="c3c_1" style="left:233.5px;top:798.9px;letter-spacing:-0.014px"><span class="tx">info@allerleirauh-stuttgart.de</span></div>
  <svg class="abs" style="left:409.8px;top:802.2px;color:#111315" width="12.80" height="12.80" viewBox="0 0 12.800 12.800" fill="#111315"><circle cx="6.400" cy="6.400" r="6.400"/><g fill="none" stroke="#808080" stroke-width=".7"><ellipse cx="6.400" cy="6.400" rx="2.700" ry="6"/><path d="M.4 4.400h12M.4 8.400h12"/></g></svg>
  <div class="abs lnk" id="c3c_2" style="left:427.4px;top:798.9px;letter-spacing:0.054px"><span class="tx">http://www.allerleirauh-stuttgart.de</span></div>
  <svg class="abs" style="left:628px;top:801.8px;color:#111315" width="11.01" height="11.01" viewBox="0 0 12.800 12.800" fill="#111315"><g fill="none" stroke="currentColor" stroke-width="1.600" stroke-linecap="round" stroke-linejoin="round"><path d="M5 2.400H2.400c-.9 0-1.600.7-1.600 1.600v6.400c0 .9.700 1.600 1.600 1.600h6.400c.9 0 1.600-.7 1.600-1.600V7.800"/><path d="M8 .8h4v4M12 .8L5.600 7.200"/></g></svg>
  <div class="abs" style="left:1175px;top:751px;width:100px;height:17.700px;border-radius:9px;background:#373b40"></div>
  <div class="badge" id="bd6" style="left:1182.5px;top:755.35px;color:#8a8a8a;font-size:9.600px;letter-spacing:0.273px">Entfernung 490 m</div>
  <div class="abs" style="left:1158px;top:776px;width:117px;height:18.500px;border-radius:10px;border:1px solid #2c3035;background:#808080"></div>
  <div class="abs" style="left:1165.6px;top:780.1px;width:10.400px;height:10.400px;border-radius:50%;background:#0b5c3e"></div>
  <div class="badge" id="bd7" style="left:1180.3px;top:780.75px;color:#0a0a0a;font-size:9.600px;letter-spacing:0.267px">Waldorfpädagogik</div>
  <div class="abs" style="left:1076px;top:831px;width:199px;height:30.500px;background:#7b6200;border-radius:4px;box-shadow:0 1px 3px rgba(0,0,0,.2)"></div>
  <svg class="abs" style="left:1087px;top:840.7px" width="11" height="11" viewBox="0 0 11 11" stroke="#000" stroke-width="1.900" stroke-linecap="butt"><path d="M5.500.5v10M.5 5.500h10"/></svg>
  <div class="abs tx" id="c3b1" style="left:1102.3px;top:836px;color:#000;white-space:nowrap;letter-spacing:0.080px">Betriebskitaplatz hinzufügen</div>
  <div class="abs" style="left:1122px;top:875px;width:153px;height:30.500px;background:#7b6200;border-radius:4px;box-shadow:0 1px 3px rgba(0,0,0,.2)"></div>
  <svg class="abs" style="left:1133px;top:884.7px" width="11" height="11" viewBox="0 0 11 11" stroke="#000" stroke-width="1.900" stroke-linecap="butt"><path d="M5.500.5v10M.5 5.500h10"/></svg>
  <div class="abs tx" id="c3b2" style="left:1148.3px;top:880px;color:#000;white-space:nowrap;letter-spacing:0.052px">Kitaplatz hinzufügen</div>
</div>

<!-- ================= OFFCANVAS ================= -->
<div id="off">
  <!-- header (coordinates inside #off: y = screenY-45) -->
  <div class="abs" id="t1" style="letter-spacing:0.1px;left:12.900px;top:16px;font-size:22.400px;line-height:28px;color:#212529;white-space:nowrap">Meine Auswahl</div>
  <svg class="abs" style="left:549.500px;top:22.500px" width="14" height="14" viewBox="0 0 14 14" fill="none" stroke="#666" stroke-width="1.400" stroke-linecap="round"><path d="M1 1l12 12M13 1L1 13"/></svg>
  <div class="abs" style="left:0;top:59px;width:576px;height:1px;background:#dee2e6"></div>
  <!-- count + print -->
  <div class="abs txb" id="t2" style="letter-spacing:0.08px;left:13.400px;top:79px;color:#4d5560;white-space:nowrap">1 Betreuungsplatz</div>
  <div class="abs" style="left:526px;top:73px;width:37px;height:31px;background:#6c757d;border-radius:4px;box-shadow:0 1px 3px rgba(0,0,0,.13)"></div>
  <svg class="abs" style="left:537.800px;top:81.300px" width="13.600" height="13.800" viewBox="0 0 512 512" fill="#fff" preserveAspectRatio="none"><path d="M128 0C92.700 0 64 28.700 64 64v96h64V64h226.700L384 93.300V160h64V93.300c0-17-6.700-33.300-18.700-45.300L400 18.700C388 6.700 371.700 0 354.700 0H128zM384 352v96H128v-96h256zm64 32h32c17.700 0 32-14.300 32-32v-96c0-35.300-28.700-64-64-64H64c-35.300 0-64 28.700-64 64v96c0 17.700 14.300 32 32 32h32v64c0 35.300 28.700 64 64 64h256c35.300 0 64-28.700 64-64v-64zm-16-136a24 24 0 1 1 0 48 24 24 0 1 1 0-48z"/></svg>
  <!-- alert -->
  <div class="abs" style="left:13px;top:116px;width:550px;height:47px;background:#d1e7dd;border:1px solid #a3cfbb;border-radius:4px"></div>
  <svg class="abs" style="left:28px;top:132.200px" width="13.500" height="13.500" viewBox="0 0 512 512" fill="#0a3622"><path d="M256 512A256 256 0 1 0 256 0a256 256 0 1 0 0 512zm113-303L241 337c-9.400 9.400-24.600 9.400-33.900 0l-64-64c-9.400-9.400-9.400-24.600 0-33.900s24.600-9.400 33.900 0l47 47L335 175c9.400-9.400 24.600-9.400 33.900 0s9.400 24.600 0 33.900z"/></svg>
  <div class="abs txb" id="t3" style="letter-spacing:0.035px;left:49px;top:130px;color:#0a3622;white-space:nowrap">Betreuungsplatz erfolgreich hinzugefügt</div>
  <svg class="abs" style="left:536.500px;top:133px" width="13" height="13" viewBox="0 0 13 13" fill="none" stroke="#5f6f68" stroke-width="1.400" stroke-linecap="round"><path d="M1 1l11 11M12 1L1 12"/></svg>
  <!-- section title -->
  <div class="abs" id="t4" style="left:13.300px;top:176px;font-size:22.400px;line-height:28px;color:#212529;white-space:nowrap;letter-spacing:-.04px">Auswahl für Mia Mustermann</div>
  <!-- card -->
  <div class="abs" style="left:13px;top:209px;width:550px;height:190px;border:1px solid #dee2e6;border-radius:5px;background:#fff"></div>
  <div class="abs" id="t5" style="left:33.300px;top:229.500px;width:375px;font-size:16px;line-height:19.200px;color:#212529">KiFaZ Wilde Hilde - Kinder- und Familienzentrum, Olgastraße</div>
  <div class="abs txb" id="t6" style="left:33.300px;top:267.500px;color:#5c636a;white-space:nowrap;letter-spacing:.145px">Olgastraße 60, 70182 Stuttgart (Mitte)</div>
  <div class="abs txb" id="t7" style="letter-spacing:0.15px;left:33.300px;top:289.500px;font-weight:700;line-height:20px;color:#212529;white-space:nowrap">Gewünschter</div>
  <div class="abs txb" id="t7b" style="letter-spacing:0.17px;left:33.300px;top:309.500px;font-weight:700;line-height:20px;color:#212529;white-space:nowrap">Betreuungsbeginn</div>
  <div class="abs txb" id="t8" style="left:253px;top:289.500px;line-height:20px;color:#212529;white-space:nowrap">September 2024</div>
  <!-- badge -->
  <div class="badge" style="left:418px;top:229px;width:125px;height:19px;border:1px solid #5f6973;background:#fff"></div>
  <div class="abs" style="left:426.500px;top:234px;width:10.400px;height:10.400px;border-radius:50%;background:#d40000"></div>
  <div class="badge" id="t9" style="left:441px;top:234.450px;color:#000;font-size:9.600px;letter-spacing:.263px">Katholischer Träger</div>
  <!-- remove button -->
  <div class="btn" style="left:399px;top:348px;width:144px;height:30.500px"></div>
  <div class="abs" style="left:409.500px;top:362.300px;width:10px;height:1.700px;background:#000"></div>
  <div class="abs txb" id="t10" style="left:424px;top:353.500px;color:#000;white-space:nowrap;letter-spacing:.08px">Kitaplatz entfernen</div>
  <!-- request button -->
  <div class="btn" style="left:344px;top:418px;width:219px;height:30.500px"></div>
  <svg class="abs" style="left:366.500px;top:427.500px" width="11.500" height="11.500" viewBox="0 0 11.500 11.500" fill="none" stroke="#000" stroke-width="1.900" stroke-linecap="round" stroke-linejoin="round"><path d="M1.100 1.200l4.300 4.550L1.100 10.300M6.300 1.200l4.300 4.550-4.300 4.550"/></svg>
  <div class="abs txb" id="t11" style="left:382.700px;top:423.500px;color:#000;white-space:nowrap;letter-spacing:.09px">Betreuungsplatz anfragen...</div>
  <!-- annotation: red ellipse + arrow -->
  <svg class="abs" style="left:0;top:0" width="320" height="120" viewBox="0 45 320 120">
    <ellipse cx="92.300" cy="75.450" rx="91.700" ry="29.200" fill="none" stroke="#f00" stroke-width="4.300"/>
    <path d="M191.79 90.84 L192.1 89.3 L195.7 87.14 L211.12 85.39 L233.94 84.98 L227.56 87.55 L215.23 90.84 L204.95 92.69 L223.45 104.2 L241.95 114.48 L262.51 128.87 L285.64 145.32 L283.07 147.37 L279.47 148.4 L262.51 137.09 L235.79 119.62 L218.31 109.34 L201.86 98.55 L205.98 106.26 L208.55 113.45 L207.83 121.98 L204.95 120.13 L201.86 115.51 L197.75 104.2 L192.1 92.89z" fill="#f00" stroke="#f00" stroke-width=".8" stroke-linejoin="round"/>
  </svg>
</div>

<!-- bottom sliver -->
<div class="abs" style="left:0;top:972px;width:1918px;height:1px;background:#1d2b36;z-index:60"></div>
<div class="abs" style="left:48px;top:972px;width:343px;height:1px;background:#c9c9c9;z-index:61"></div>
</body>
</html>
